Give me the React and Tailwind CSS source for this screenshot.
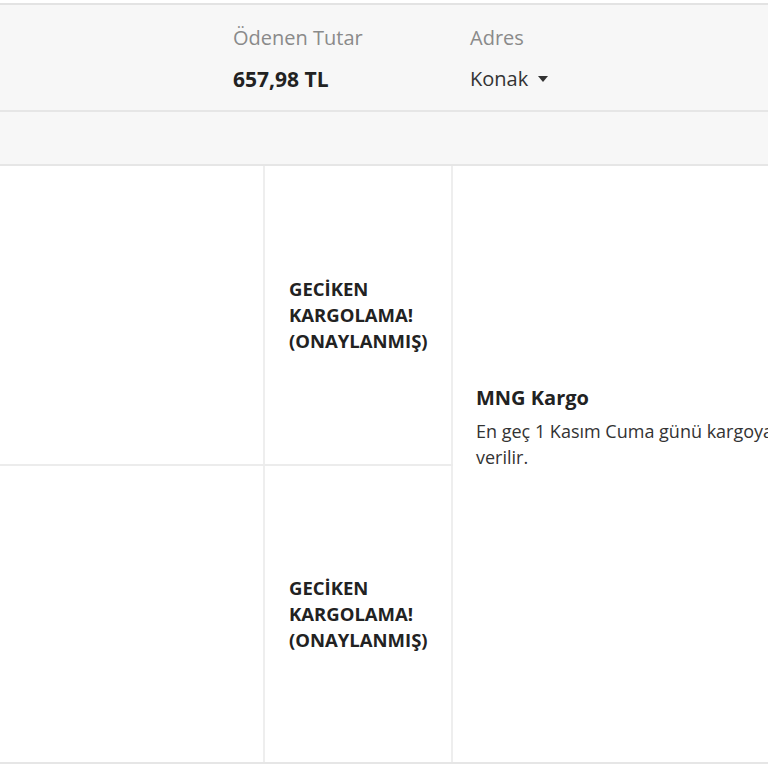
import React from "react";

const rows = [
    { status: ["GECİKEN", "KARGOLAMA!", "(ONAYLANMIŞ)"], h: "h-[300px]" },
    { status: ["GECİKEN", "KARGOLAMA!", "(ONAYLANMIŞ)"], h: "h-[296px]" },
];

const App = () => {
    return (
        <div className="w-[768px] h-[768px] overflow-hidden bg-white pt-[3px]" style={{ fontFamily: '"Open Sans", sans-serif' }}>
            {/* summary header */}
            <div className="w-[1000px] bg-[#f7f7f7] border-t-2 border-[#e3e3e3]">
                <div className="flex h-[107px] pt-[20px] border-b-2 border-[#e6e6e6]">
                    <div className="w-[233px]" />
                    <div className="w-[237px] flex flex-col">
                        <span className="text-[20px] leading-[26px] text-[#8a8a8a]">Ödenen Tutar</span>
                        <span className="text-[21px] leading-[26px] mt-[15px] font-bold text-[#222]">657,98 TL</span>
                    </div>
                    <div className="flex flex-col">
                        <span className="text-[20px] leading-[26px] text-[#8a8a8a]">Adres</span>
                        <span className="text-[20px] leading-[26px] mt-[15px] text-[#333] flex items-center gap-[10px]">
                            Konak
                            <svg width="10" height="6" viewBox="0 0 10 6"><path d="M0 0h10L5 6z" fill="#333" /></svg>
                        </span>
                    </div>
                </div>
                <div className="h-[54px] border-b-2 border-[#e6e6e6]" />
            </div>

            {/* order table */}
            <div className="w-[1000px] flex border-b-2 border-[#e6e6e6]">
                <div className="w-[453px] flex flex-col">
                    {rows.map((r, i) => (
                        <div key={i} className={`flex ${r.h} ${i === 0 ? "border-b-2 border-[#ececec]" : ""}`}>
                            <div className="w-[265px] border-r-2 border-[#eeeeee]" />
                            <div className="flex-1 border-r-2 border-[#eeeeee] flex items-center pl-[24px]">
                                <p className="text-[18.5px] leading-[26px] font-bold text-[#222]">
                                    {r.status.map((s, j) => (
                                        <span key={j} className="block">{s}</span>
                                    ))}
                                </p>
                            </div>
                        </div>
                    ))}
                </div>
                <div className="flex-1 pl-[23px] pt-[219px]">
                    <p className="text-[20px] leading-[26px] font-bold text-[#222]">MNG Kargo</p>
                    <p className="text-[18px] leading-[26px] mt-[7px] text-[#333] w-[340px]">En geç 1 Kasım Cuma günü kargoya verilir.</p>
                </div>
            </div>
        </div>
    );
};

export default App;
